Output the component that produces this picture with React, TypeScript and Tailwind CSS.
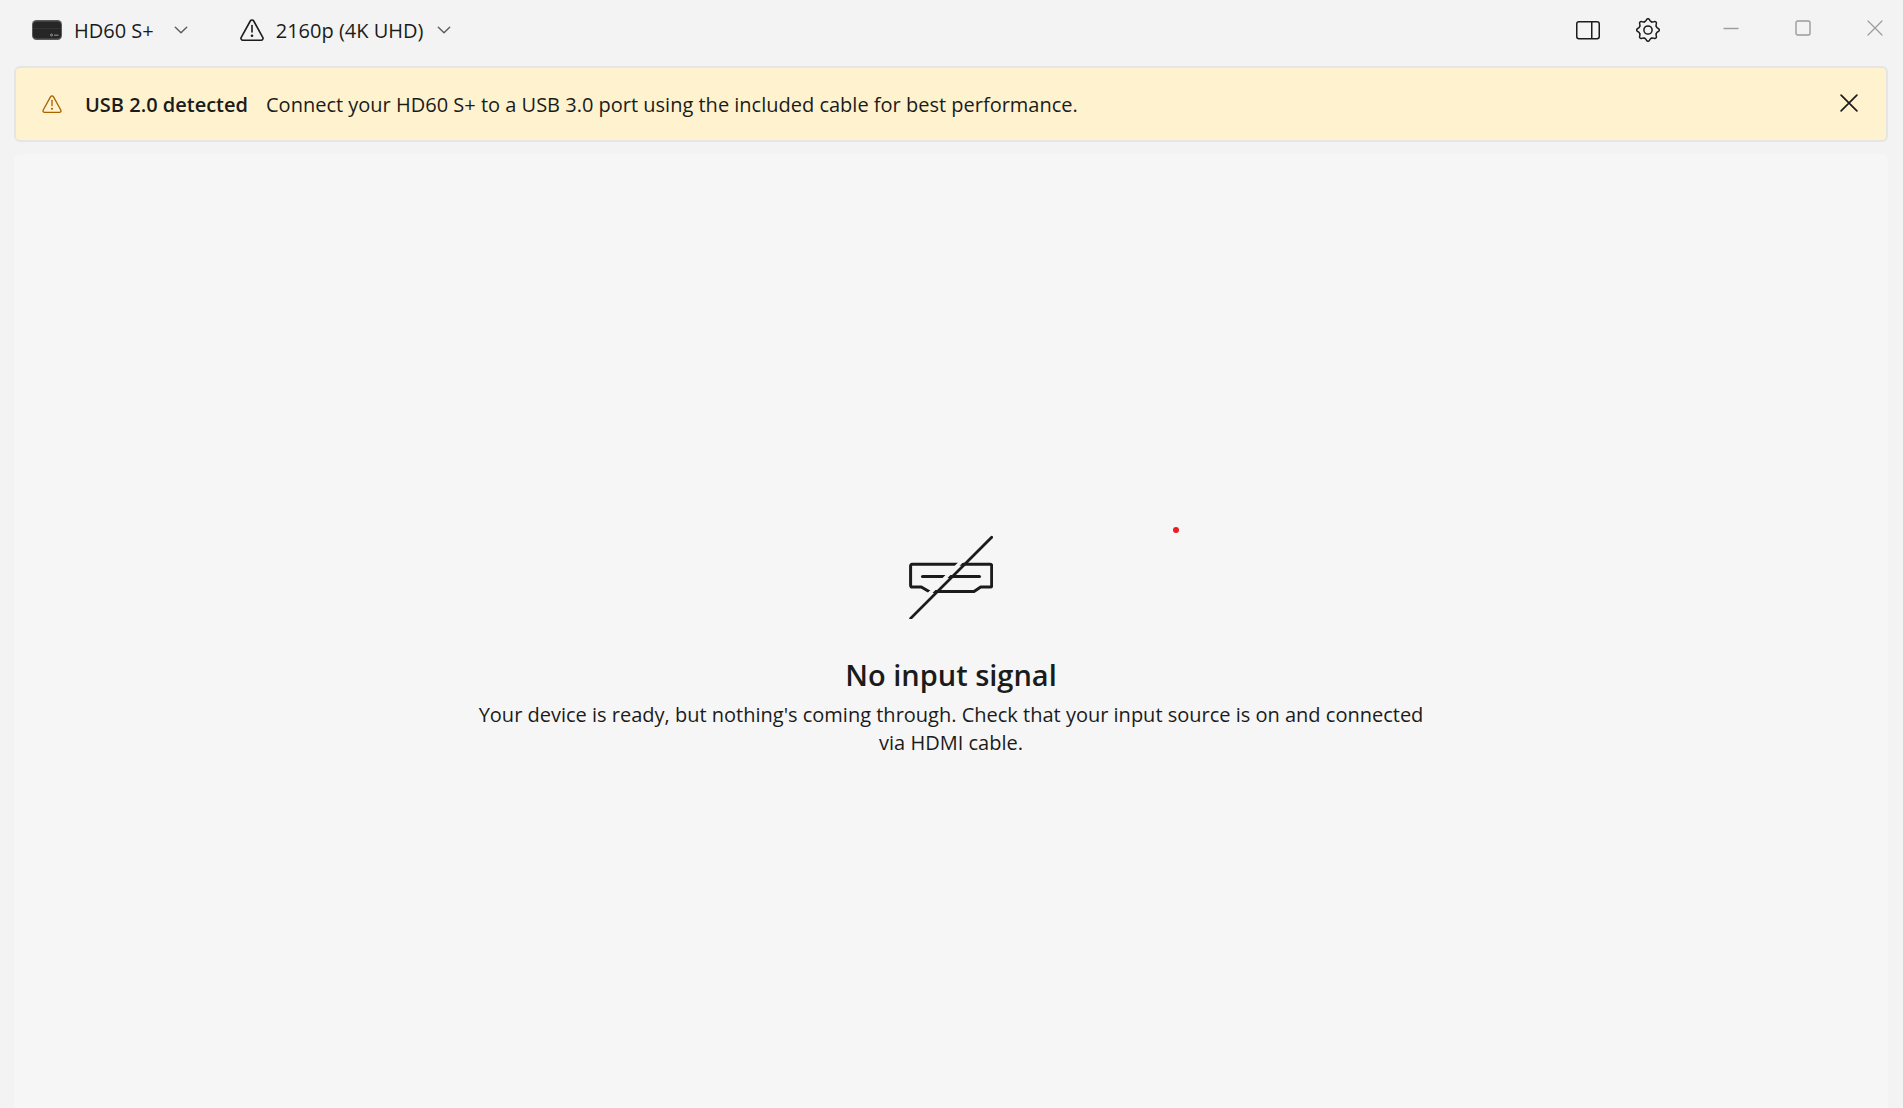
import { useState } from "react";

const WarningIcon = ({ className }: { className: string }) => (
  <svg
    viewBox="0 0 24 22"
    className={className}
    fill="none"
    stroke="currentColor"
    strokeWidth="1.6"
    strokeLinejoin="round"
    strokeLinecap="round"
  >
    <path d="M10.3 2 1.1 18.6a1.9 1.9 0 0 0 1.7 2.6h18.4a1.9 1.9 0 0 0 1.7-2.6L13.7 2a1.95 1.95 0 0 0-3.4 0Z" />
    <path d="M12 6.5v6.5" />
    <circle cx="12" cy="16.8" r="1.3" fill="currentColor" stroke="none" />
  </svg>
);

const ChevronIcon = () => (
  <svg
    viewBox="0 0 14 8"
    className="h-2 w-3.5"
    fill="none"
    stroke="#5c5c5c"
    strokeWidth="1.4"
    strokeLinecap="round"
    strokeLinejoin="round"
  >
    <path d="M1.3 1.2 7 6.8l5.7-5.6" />
  </svg>
);

const CloseIcon = ({ className }: { className: string }) => (
  <svg
    viewBox="0 0 16 16"
    className={className}
    fill="none"
    stroke="currentColor"
    strokeLinecap="round"
  >
    <path d="M1 1l14 14M15 1 1 15" />
  </svg>
);

const DeviceIcon = () => (
  <svg viewBox="0 0 30 20" className="h-5 w-[30px]">
    <rect width="30" height="20" rx="4.5" fill="#5a5a5a" />
    <rect x="1" y="1.5" width="28" height="17" rx="3.5" fill="#262626" />
    <path d="M1 8.5h28" stroke="#333" strokeWidth="1" />
    <circle cx="19.5" cy="15" r="1" fill="none" stroke="#bbb" strokeWidth=".7" />
    <path d="M22 15.2h4.5" stroke="#8a8a8a" strokeWidth="1.2" />
  </svg>
);

const PanelIcon = () => (
  <svg viewBox="0 0 24 24" className="size-6" fill="none" stroke="currentColor" strokeWidth="1.5">
    <rect x=".75" y="3.75" width="22.5" height="17" rx="2.2" />
    <path d="M15.75 3.75v17" />
  </svg>
);

const teeth = [0, 45, 90, 135, 180, 225, 270, 315];

const GearIcon = () => (
  <svg
    viewBox="-12 -12 24 24"
    className="size-6"
    fill="none"
    stroke="currentColor"
    strokeWidth="1.5"
    strokeLinecap="round"
  >
    <circle r="4.1" />
    {teeth.map((angle) => (
      <path
        key={angle}
        transform={`rotate(${angle})`}
        d="M-3.44-8.31C-2.2-8.8-1.9-9.3-1.5-10.3-1-11.6 1-11.6 1.5-10.3 1.9-9.3 2.2-8.8 3.44-8.31"
      />
    ))}
  </svg>
);

const NoSignalIcon = () => (
  <svg
    viewBox="0 0 84 84"
    className="size-[84px]"
    fill="none"
    stroke="currentColor"
    strokeWidth="3"
    strokeLinecap="round"
    strokeLinejoin="round"
  >
    <path d="M3 29.3h78.3a1.4 1.4 0 0 1 1.4 1.4v19.9a1.4 1.4 0 0 1-1.4 1.4h-9.6l-6.7 4.5H20L12.3 52H3a1.4 1.4 0 0 1-1.4-1.4V30.7A1.4 1.4 0 0 1 3 29.3Z" />
    <path d="M13.5 41.4h57" />
    <path d="M-1.4 80.4 79.7-.7" stroke="#f6f6f6" strokeWidth="3.4" />
    <path d="M1.6 83.4 82.7 2.3" strokeWidth="2.8" />
  </svg>
);

const TitleBar = () => (
  <header className="flex h-[60px] items-center justify-between pl-8 pr-5">
    <div className="flex items-center">
      <button className="flex items-center">
        <DeviceIcon />
        <span className="ml-3 mr-5 pt-0.5">HD60 S+</span>
        <ChevronIcon />
      </button>
      <button className="ml-[52px] flex items-center">
        <WarningIcon className="h-[22px] w-6" />
        <span className="ml-3 mr-3.5 pt-0.5">2160p (4K UHD)</span>
        <ChevronIcon />
      </button>
    </div>
    <div className="flex items-center">
      <button aria-label="Toggle sidebar">
        <PanelIcon />
      </button>
      <button aria-label="Settings" className="ml-9">
        <GearIcon />
      </button>
      <div className="ml-[63px] flex gap-14 pb-1 text-[#9b9b9b]">
        <button aria-label="Minimize">
          <svg viewBox="0 0 16 16" className="size-4" stroke="currentColor" strokeWidth="1.4">
            <path d="M.5 8.5h15" />
          </svg>
        </button>
        <button aria-label="Maximize">
          <svg viewBox="0 0 16 16" className="size-4" fill="none" stroke="currentColor" strokeWidth="1.4">
            <rect x="1" y="1" width="14" height="14" rx="1.8" />
          </svg>
        </button>
        <button aria-label="Close">
          <CloseIcon className="size-4 stroke-[1.2]" />
        </button>
      </div>
    </div>
  </header>
);

const App = () => {
  const [showBanner, setShowBanner] = useState(true);

  return (
    <div className="flex min-h-screen flex-col bg-[#f3f3f3] font-['Open_Sans',sans-serif] text-[20px] leading-7 text-[#1b1b1b]">
      <TitleBar />
      {showBanner && (
        <div
          role="alert"
          className="ml-3.5 mr-[15px] mt-1.5 flex min-h-[76px] items-center rounded-md border-2 border-[#e5e5e5] bg-[#fff3cf] px-[26px]"
        >
          <WarningIcon className="h-[18px] w-5 shrink-0 text-[#a86200]" />
          <p className="ml-[23px] flex-1 pt-0.5">
            <strong className="mr-[18px] font-semibold">USB 2.0 detected</strong>
            Connect your HD60 S+ to a USB 3.0 port using the included cable for best performance.
          </p>
          <button aria-label="Dismiss" onClick={() => setShowBanner(false)} className="mr-0.5 pb-0.5">
            <CloseIcon className="size-[18px] stroke-[1.5]" />
          </button>
        </div>
      )}
      <main className="relative ml-3.5 mr-[15px] mt-3 flex flex-1 flex-col items-center justify-center rounded-t-md bg-[#f6f6f6] pt-[30px] text-center">
        <NoSignalIcon />
        <h1 className="mt-9 text-[29px] font-semibold leading-10">No input signal</h1>
        <p className="mt-1.5 max-w-[960px]">
          Your device is ready, but nothing's coming through. Check that your input source is on and
          connected via HDMI cable.
        </p>
        <span className="absolute left-1/2 top-[373px] ml-[222px] size-1.5 rounded-full bg-[#ec1c24]" />
      </main>
    </div>
  );
};

export default App;
